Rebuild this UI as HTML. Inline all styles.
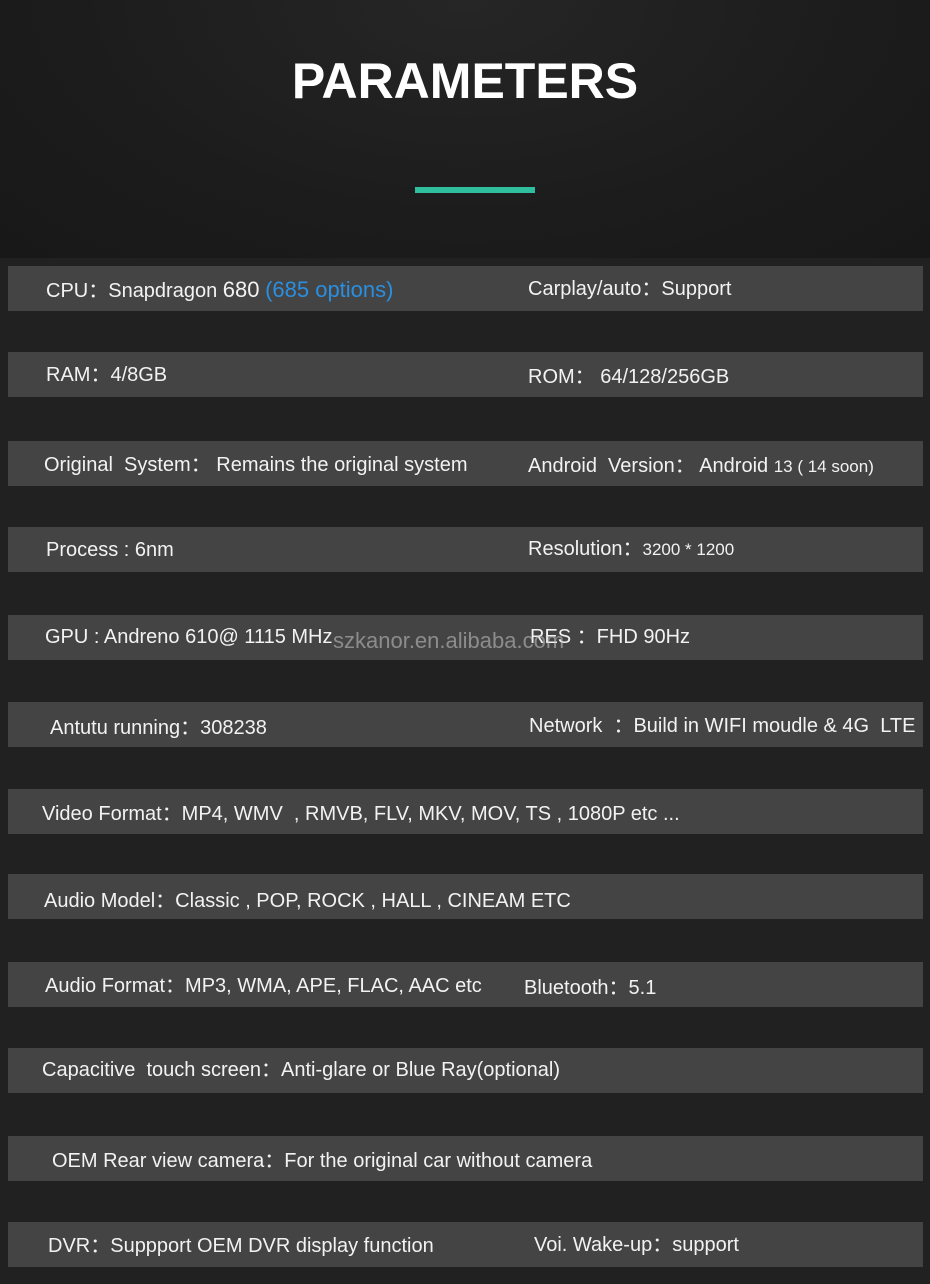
<!DOCTYPE html>
<html><head><meta charset="utf-8"><style>
*{margin:0;padding:0}
body{width:930px;height:1284px;background:#212121;position:relative;overflow:hidden;font-family:"Liberation Sans",Arial,"Noto Sans CJK SC",sans-serif;color:#f2f2f2}
.hd{position:absolute;left:0;top:0;width:930px;height:258px;background:radial-gradient(ellipse at 50% 0%,#262626 0%,#1c1c1c 60%,#181818 100%)}
h1{position:absolute;top:52px;left:0;width:930px;text-align:center;font-size:50px;font-weight:bold;color:#fff}
.ln{position:absolute;left:415px;top:187px;width:120px;height:6px;background:#2fbf9f}
.bar{position:absolute;left:8px;width:915px;height:45px;background:#444}
.t{position:absolute;font-size:20px;white-space:nowrap;line-height:22px}
.b{color:#2a8fe0}
.wm{position:absolute;left:333px;top:628px;font-size:22px;color:rgba(200,200,200,.55);white-space:nowrap}
</style></head><body>
<div class="hd"></div>
<h1>PARAMETERS</h1>
<div class="ln"></div>
<div class="bar" style="top:266px"></div>
<div class="bar" style="top:352px"></div>
<div class="bar" style="top:441px"></div>
<div class="bar" style="top:527px"></div>
<div class="bar" style="top:615px"></div>
<div class="bar" style="top:702px"></div>
<div class="bar" style="top:789px"></div>
<div class="bar" style="top:874px"></div>
<div class="bar" style="top:962px"></div>
<div class="bar" style="top:1048px"></div>
<div class="bar" style="top:1136px"></div>
<div class="bar" style="top:1222px"></div>

<div class="t" style="left:46px;top:279px">CPU：Snapdragon <span style="font-size:22px">680</span> <span class="b" style="font-size:22px">(685 options)</span></div>
<div class="t" style="left:528px;top:278px">Carplay/auto：Support</div>
<div class="t" style="left:46px;top:364px">RAM：4/8GB</div>
<div class="t" style="left:528px;top:366px">ROM： 64/128/256GB</div>
<div class="t" style="left:44px;top:454px">Original&nbsp; System： Remains the original system</div>
<div class="t" style="left:528px;top:455px">Android&nbsp; Version： Android <span style="font-size:17px">13 ( 14 soon)</span></div>
<div class="t" style="left:46px;top:539px">Process : 6nm</div>
<div class="t" style="left:528px;top:538px">Resolution：<span style="font-size:17px">3200 * 1200</span></div>
<div class="t" style="left:45px;top:626px">GPU : Andreno 610@ 1115 MHz</div>
<div class="t" style="left:530px;top:626px">RES ：FHD 90Hz</div>
<div class="wm">szkanor.en.alibaba.com</div>
<div class="t" style="left:50px;top:717px">Antutu running：308238</div>
<div class="t" style="left:529px;top:715px">Network &nbsp;：Build in WIFI moudle &amp; 4G&nbsp; LTE</div>
<div class="t" style="left:42px;top:803px">Video Format：MP4, WMV&nbsp; , RMVB, FLV, MKV, MOV, TS , 1080P etc ...</div>
<div class="t" style="left:44px;top:890px">Audio Model：Classic , POP, ROCK , HALL , CINEAM ETC</div>
<div class="t" style="left:45px;top:975px">Audio Format：MP3, WMA, APE, FLAC, AAC etc</div>
<div class="t" style="left:524px;top:977px">Bluetooth：5.1</div>
<div class="t" style="left:42px;top:1059px">Capacitive&nbsp; touch screen：Anti-glare or Blue Ray(optional)</div>
<div class="t" style="left:52px;top:1150px">OEM Rear view camera：For the original car without camera</div>
<div class="t" style="left:48px;top:1235px">DVR：Suppport OEM DVR display function</div>
<div class="t" style="left:534px;top:1234px">Voi. Wake-up：support</div>
</body></html>
